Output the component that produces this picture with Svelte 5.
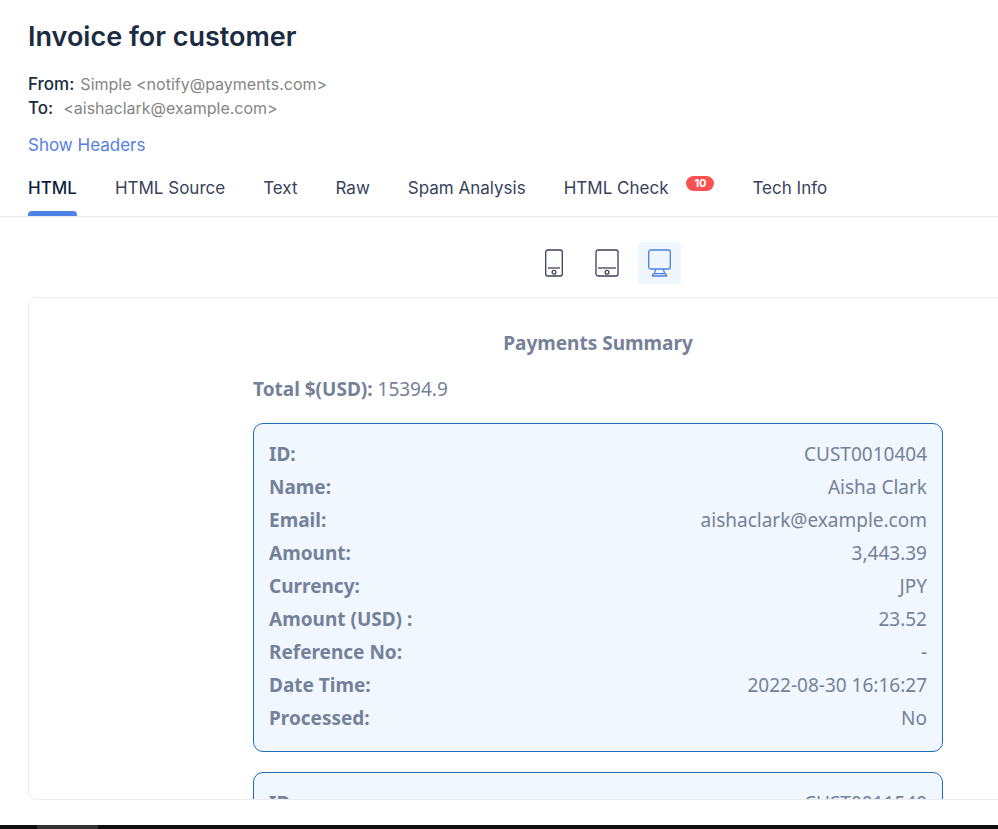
<script>
  const tabs = [
    { label: 'HTML' },
    { label: 'HTML Source' },
    { label: 'Text' },
    { label: 'Raw' },
    { label: 'Spam Analysis' },
    { label: 'HTML Check', count: 10 },
    { label: 'Tech Info' }
  ];
  let activeTab = $state('HTML');
  let device = $state('desktop');

  const payments = [
    [
      ['ID:', 'CUST0010404'],
      ['Name:', 'Aisha Clark'],
      ['Email:', 'aishaclark@example.com'],
      ['Amount:', '3,443.39'],
      ['Currency:', 'JPY'],
      ['Amount (USD) :', '23.52'],
      ['Reference No:', '-'],
      ['Date Time:', '2022-08-30 16:16:27'],
      ['Processed:', 'No']
    ],
    [['ID:', 'CUST0011540']]
  ];
</script>

<div class="page">
  <header>
    <h1>Invoice for customer</h1>
    <dl class="meta">
      <div><dt>From:</dt><dd>Simple &lt;notify@payments.com&gt;</dd></div>
      <div class="to"><dt>To:</dt><dd>&lt;aishaclark@example.com&gt;</dd></div>
    </dl>
    <a class="show" href="#headers">Show Headers</a>
  </header>

  <nav>
    {#each tabs as tab}
      <button class="tab" class:active={activeTab === tab.label} onclick={() => (activeTab = tab.label)}>
        {tab.label}
        {#if tab.count}<span class="badge">{tab.count}</span>{/if}
      </button>
    {/each}
  </nav>

  <main>
    <div class="devices">
      <button class:on={device === 'phone'} aria-label="Phone" onclick={() => (device = 'phone')}>
        <svg width="20" height="30" viewBox="0 0 20 30">
          <rect x="1.7" y="2" width="16.6" height="26" rx="2" />
          <path d="M4 20H16" />
          <circle cx="10" cy="24.2" r="1.9" />
        </svg>
      </button>
      <button class:on={device === 'tablet'} aria-label="Tablet" onclick={() => (device = 'tablet')}>
        <svg width="24" height="30" viewBox="0 0 24 30">
          <rect x="1" y="2" width="22" height="26" rx="2" />
          <path d="M3 20H21" />
          <circle cx="12" cy="24.2" r="1.9" />
        </svg>
      </button>
      <button class:on={device === 'desktop'} aria-label="Desktop" onclick={() => (device = 'desktop')}>
        <svg width="24" height="30" viewBox="0 0 24 30">
          <rect x="0.7" y="2" width="21.6" height="19" rx="2" />
          <path d="M7.8 21L6.3 25.6M15.2 21L16.7 25.6" />
          <path d="M6.3 25.6H16.7C17.9 25.6 18.5 26.5 18.5 28H4.5C4.5 26.5 5.1 25.6 6.3 25.6Z" />
        </svg>
      </button>
    </div>

    <section class="panel">
      <div class="mail">
        <h2>Payments Summary</h2>
        <p class="total"><strong>Total $(USD):</strong> 15394.9</p>
        {#each payments as rows}
          <dl class="card">
            {#each rows as [name, value]}
              <div><dt>{name}</dt><dd>{value}</dd></div>
            {/each}
          </dl>
        {/each}
      </div>
    </section>
  </main>

  <footer><span></span></footer>
</div>

<style>
  .page {
    display: flex;
    flex-direction: column;
    height: 100vh;
    overflow: hidden;
    background: #fff;
    font-family: Inter, 'Liberation Sans', sans-serif;
    color: #1a2b42;
  }
  h1, h2, p, dl, dd { margin: 0; }
  header { padding: 20px 28px 0; }
  h1 { font-size: 27px; line-height: 34px; font-weight: 600; }
  .meta { margin-top: 18px; font-size: 16px; line-height: 24px; }
  .meta div { display: flex; gap: 6px; }
  .meta .to { gap: 10px; }
  .meta dt { font-size: 17px; font-weight: 500; }
  .meta dd { color: #858585; }
  .show {
    display: inline-block;
    margin-top: 13px;
    font-size: 17px;
    line-height: 24px;
    color: #5580e2;
    text-decoration: none;
  }
  nav {
    display: flex;
    gap: 38px;
    padding: 2px 28px 0;
    border-bottom: 1px solid #ebebed;
  }
  button { border: 0; padding: 0; background: none; font: inherit; color: inherit; cursor: pointer; }
  .tab {
    position: relative;
    display: flex;
    gap: 18px;
    height: 57px;
    padding-top: 17px;
    font-size: 17px;
    line-height: 24px;
    color: #38425b;
    white-space: nowrap;
  }
  .tab.active { font-weight: 500; color: #101f3f; }
  .tab.active::after {
    content: '';
    position: absolute;
    left: 0;
    right: 0;
    bottom: 0;
    height: 5px;
    border-radius: 4px 4px 0 0;
    background: #4f82e6;
  }
  .badge {
    width: 28px;
    height: 15px;
    border-radius: 8px;
    background: #fa5252;
    color: #fff;
    font-size: 11px;
    line-height: 15px;
    font-weight: 700;
    text-align: center;
  }
  /* The preview pane keeps its desktop width and runs past the window's right edge. */
  main {
    display: flex;
    flex-direction: column;
    flex: 1;
    min-height: 0;
    width: calc(100% + 198px);
    box-sizing: border-box;
    padding: 25px 28px;
  }
  .devices { display: flex; justify-content: center; gap: 10px; padding: 0 0 13px 17px; }
  .devices button {
    display: flex;
    align-items: center;
    justify-content: center;
    width: 43px;
    height: 42px;
    border-radius: 4px;
    color: #3c4258;
  }
  .devices .on { background: #f0f6fe; color: #4f7fe0; }
  svg { fill: none; stroke: currentColor; stroke-width: 1.3; }
  .panel {
    display: flex;
    justify-content: center;
    flex: 1;
    min-height: 0;
    overflow: hidden;
    border: 1px solid #ececee;
    border-radius: 8px;
    font-family: 'Noto Sans', 'Open Sans', sans-serif;
    font-size: 19px;
    line-height: 33px;
    color: #758198;
  }
  .mail { width: 690px; padding-top: 29px; }
  h2 { font-size: 19px; line-height: 33px; font-weight: 700; text-align: center; }
  .total { margin-top: 13px; margin-bottom: 17px; }
  .card {
    margin-bottom: 20px;
    padding: 14px 15px 16px;
    border: 1px solid #1f6cb8;
    border-radius: 10px;
    background: #f0f7ff;
  }
  .card div { display: flex; justify-content: space-between; }
  dt { font-weight: 700; }
  footer { height: 4px; flex: none; padding-left: 37px; background: #0e0e10; }
  footer span { display: block; width: 61px; height: 4px; background: #333; }
</style>
